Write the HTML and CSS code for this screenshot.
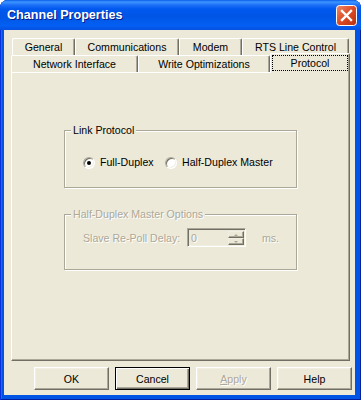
FILE: index.html
```html
<!DOCTYPE html>
<html lang="en">
<head>
    <meta charset="UTF-8">
    <meta name="viewport" content="width=device-width, initial-scale=1.0">
    <title>Channel Properties</title>
    <link rel="stylesheet" href="styles.css">
</head>
<body>
    <div class="window">
        <div class="titlebar">
            <span class="title">Channel Properties</span>
            <button class="close" aria-label="Close">
                <svg width="21" height="21" viewBox="0 0 21 21">
                    <defs>
                        <linearGradient id="red" x1="0" y1="0" x2="1" y2="1">
                            <stop offset="0" stop-color="#F08A6A"/>
                            <stop offset="0.5" stop-color="#DC4A24"/>
                            <stop offset="1" stop-color="#B8300E"/>
                        </linearGradient>
                    </defs>
                    <rect x="0.5" y="0.5" width="20" height="20" rx="3" fill="url(#red)" stroke="#fff"/>
                    <path d="M6 6 L15 15 M15 6 L6 15" stroke="#fff" stroke-width="2.4" stroke-linecap="square"/>
                </svg>
            </button>
        </div>

        <div class="client">
            <div class="tabs">
                <div class="tab-row back">
                    <div class="tab tab-general">General</div>
                    <div class="tab tab-comms">Communications</div>
                    <div class="tab tab-modem">Modem</div>
                    <div class="tab tab-rts">RTS Line Control</div>
                </div>
                <div class="tab-row front">
                    <div class="tab tab-network">Network Interface</div>
                    <div class="tab tab-write">Write Optimizations</div>
                    <div class="tab tab-protocol selected"><span class="focus">Protocol</span></div>
                </div>
            </div>

            <div class="panel">
                <fieldset class="group">
                    <legend>Link Protocol</legend>
                    <div class="radios">
                        <label class="option option-full"><span class="radio checked"></span>Full-Duplex</label>
                        <label class="option"><span class="radio"></span>Half-Duplex Master</label>
                    </div>
                </fieldset>

                <fieldset class="group group-disabled">
                    <legend>Half-Duplex Master Options</legend>
                    <div class="delay-row">
                        <span class="delay-label">Slave Re-Poll Delay:</span>
                        <div class="spin-field">
                            <span class="value">0</span>
                            <div class="spinner">
                                <span class="spin spin-up"></span>
                                <span class="spin spin-down"></span>
                            </div>
                        </div>
                        <span class="unit">ms.</span>
                    </div>
                </fieldset>
            </div>

            <div class="buttons">
                <button class="btn">OK</button>
                <button class="btn btn-default">Cancel</button>
                <button class="btn" disabled><u>A</u>pply</button>
                <button class="btn">Help</button>
            </div>
        </div>
    </div>
</body>
</html>
```

FILE: styles.css
```css
:root {
    --face: #ECE9D8;
    --light: #F1EFE2;
    --shadow: #ACA899;
    --dark: #716F64;
    --text: #000;
    --disabled: #ACA899;
}

* {
    box-sizing: border-box;
}

body {
    margin: 0;
    font-family: "Liberation Sans", Arial, sans-serif;
    font-size: 10.6px;
    color: var(--text);
    background: #fff;
}

.window {
    width: 361px;
    height: 400px;
    padding: 0 6px 5px 4px;
    display: flex;
    flex-direction: column;
    background: #0054E3;
    border-radius: 8px 8px 0 0;
    box-shadow: inset 1px 0 #0831D9, inset -1px 0 #001EA0, inset 0 -1px #001EA0, inset 2px 0 #166AEE;
}

/* title bar */
.titlebar {
    height: 30px;
    flex: none;
    margin: 0 -6px 0 -4px;
    padding: 0 4px 0 7px;
    display: flex;
    align-items: center;
    justify-content: space-between;
    border-radius: 8px 8px 0 0;
    background: linear-gradient(#0A5FEA 0, #3D95FF 2px, #1C6FF6 5px, #0058EE 9px, #0055E5 55%, #0360F2 85%, #0650E0 100%);
}

.title {
    color: #fff;
    font-weight: bold;
    font-size: 12.6px;
    text-shadow: 1px 1px #0A1883;
}

.close {
    width: 21px;
    height: 21px;
    padding: 0;
    border: 0;
    background: none;
    display: block;
}

.close svg {
    display: block;
}

.client {
    flex: 1;
    background: var(--face);
    padding: 8px 5px 5px 7px;
    display: flex;
    flex-direction: column;
}

/* tabs */
.tab-row {
    display: flex;
    height: 17px;
}

.tab-row.back {
    padding-left: 1px;
}

.tab {
    height: 17px;
    text-align: center;
    line-height: 16px;
    white-space: nowrap;
    background: var(--face);
    border-top: 1px solid #fff;
    border-left: 1px solid #fff;
    border-right: 1px solid var(--dark);
    border-radius: 2px 2px 0 0;
    box-shadow: inset -1px 0 var(--shadow);
}

.tab-general { width: 63px; }
.tab-comms { width: 104px; }
.tab-modem { width: 63px; }
.tab-rts { width: 107px; }
.tab-network { width: 127px; }
.tab-write { width: 132px; }
.tab-protocol { width: 80px; }

.tab.selected {
    position: relative;
    z-index: 1;
    height: 20px;
    margin-top: -2px;
    padding: 1px 1px 0;
}

.focus {
    display: block;
    height: 16px;
    line-height: 14px;
    border: 1px dotted #000;
}

.panel {
    height: 289px;
    flex: none;
    padding-top: 51px;
    border-top: 1px solid #fff;
    border-left: 1px solid #fff;
    border-right: 1px solid var(--dark);
    border-bottom: 1px solid var(--dark);
    box-shadow: inset -1px -1px var(--shadow);
}

/* group boxes */
.group {
    width: 233px;
    margin: 0 auto;
    padding: 0;
    border: 1px solid var(--shadow);
    box-shadow: inset 1px 1px #fff, 1px 1px #fff;
}

.group legend {
    margin-left: 6px;
    padding: 0 2px;
    line-height: 12px;
    background: var(--face);
}

.group-disabled {
    margin-top: 20px;
}

.group-disabled legend,
.delay-label,
.unit,
.value {
    color: var(--disabled);
    text-shadow: 1px 1px #fff;
}

.radios {
    display: flex;
    align-items: center;
    height: 13px;
    margin: 20px 0 18px 18px;
}

.option {
    display: flex;
    align-items: center;
    gap: 5px;
    line-height: 13px;
}

.option-full {
    width: 82px;
}

.radio {
    position: relative;
    width: 12px;
    height: 12px;
    border-radius: 50%;
    background: #fff;
    border: 1px solid;
    border-color: var(--shadow) #fff #fff var(--shadow);
    box-shadow: inset 1px 1px var(--dark), inset -1px -1px var(--light);
}

.radio.checked::after {
    content: "";
    position: absolute;
    left: 3px;
    top: 3px;
    width: 4px;
    height: 4px;
    border-radius: 50%;
    background: #000;
}

.delay-row {
    display: flex;
    align-items: center;
    margin: 8px 0 22px 18px;
}

.delay-label {
    width: 104px;
}

.spin-field {
    width: 59px;
    height: 19px;
    display: flex;
    justify-content: space-between;
    padding: 2px 1px 1px 3px;
    border: 1px solid;
    border-color: var(--shadow) #fff #fff var(--shadow);
    box-shadow: inset 1px 1px var(--dark), inset -1px -1px var(--light);
}

.value {
    line-height: 14px;
}

.spinner {
    width: 16px;
    display: flex;
    flex-direction: column;
}

.spin {
    flex: 1;
    display: flex;
    align-items: center;
    justify-content: center;
    background: var(--face);
    border: 1px solid;
    border-color: var(--light) var(--dark) var(--dark) var(--light);
    box-shadow: inset -1px -1px var(--shadow);
}

.spin::before {
    content: "";
    border-left: 2px solid transparent;
    border-right: 2px solid transparent;
}

.spin-up::before {
    border-bottom: 2px solid var(--disabled);
}

.spin-down::before {
    border-top: 2px solid var(--disabled);
}

.unit {
    margin-left: 16px;
}

/* dialog buttons */
.buttons {
    display: flex;
    gap: 6px;
    margin: 6px -2px 0 23px;
}

.btn {
    width: 75px;
    height: 23px;
    padding: 0;
    font: inherit;
    color: var(--text);
    background: var(--face);
    border: 1px solid;
    border-color: #fff var(--dark) var(--dark) #fff;
    box-shadow: inset -1px -1px var(--shadow), inset 1px 1px var(--light);
}

.btn-default {
    border-color: #000;
    box-shadow: inset 1px 1px #fff, inset -1px -1px var(--dark), inset -2px -2px var(--shadow);
}

.btn:disabled {
    color: var(--disabled);
    text-shadow: 1px 1px #fff;
}
```
